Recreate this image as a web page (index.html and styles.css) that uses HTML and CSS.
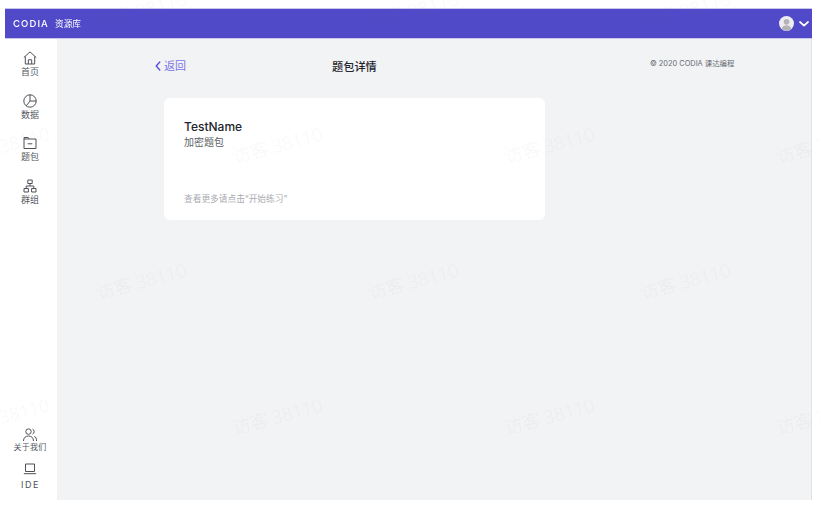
FILE: index.html
```html
<!DOCTYPE html>
<html lang="zh-CN">
<head>
<meta charset="utf-8">
<title>题包详情</title>
<link rel="stylesheet" href="styles.css">
</head>
<body>
<div class="app">
  <header class="topbar">
    <div class="brand"><span class="logo">CODIA</span><span class="lib">资源库</span></div>
    <div class="user">
      <svg class="avatar" viewBox="0 0 16 16"><circle cx="8" cy="8" r="8" fill="#eeeef1"/><circle cx="8" cy="6.200" r="3" fill="#b4b4b8"/><path d="M2.800 13.600c.8-2.600 2.800-3.800 5.200-3.800s4.400 1.200 5.200 3.800A8 8 0 0 1 8 16a8 8 0 0 1-5.200-2.400z" fill="#b4b4b8"/></svg>
      <svg class="caret" viewBox="0 0 10 6"><path d="M1 1l4 3.600L9 1" fill="none" stroke="#fff" stroke-width="1.700" stroke-linecap="round" stroke-linejoin="round"/></svg>
    </div>
  </header>
  <div class="body">
    <nav class="sidebar">
      <div class="nav-top">
        <a class="nav-item">
          <svg class="icon" viewBox="0 0 14 14"><path d="M.8 6.500L7 .9l6.200 5.600M2.300 5.400v7.600h9.400V5.400M5.300 13V8.800h3.400V13"/></svg>
          <span>首页</span>
        </a>
        <a class="nav-item">
          <svg class="icon" viewBox="0 0 14 14"><circle cx="7" cy="7" r="6.200"/><path d="M7 .8V7h6.200M7 7l-3.800 4.900"/></svg>
          <span>数据</span>
        </a>
        <a class="nav-item">
          <svg class="icon" viewBox="0 0 14 14"><path d="M1 1.500h4.200l1 1.500H13v9.500H1zM1 3h5.200M4.700 7.800h4.600"/></svg>
          <span>题包</span>
        </a>
        <a class="nav-item">
          <svg class="icon" viewBox="0 0 14 14"><path d="M4.800 1h4.400v3.500H4.800zM1 9.500h4.400V13H1zM8.600 9.500H13V13H8.600zM7 4.500V7M3.200 9.500V7h7.600v2.500"/></svg>
          <span>群组</span>
        </a>
      </div>
      <div class="nav-bottom">
        <a class="nav-item tight">
          <svg class="icon wide" viewBox="0 0 16 14"><circle cx="6.500" cy="3.600" r="2.700"/><path d="M1.500 13c0-3.200 2-5 5-5s5 1.800 5 5M10.500 1.100a2.700 2.700 0 0 1 0 5M12.300 8.300c1.500.7 2.300 2.300 2.300 4.700"/></svg>
          <span class="small">关于我们</span>
        </a>
        <a class="nav-item tight">
          <svg class="icon" viewBox="0 0 14 14"><path d="M2.500 2h9v7.500h-9zM.8 11.700h12.400"/></svg>
          <span class="ide">IDE</span>
        </a>
      </div>
    </nav>
    <main class="main">
      <div class="page-head">
        <a class="back"><svg class="back-icon" viewBox="0 0 6 10"><path d="M4.800 1L1.200 5l3.600 4" fill="none" stroke="#5a50d6" stroke-width="1.400" stroke-linecap="round" stroke-linejoin="round"/></svg>返回</a>
        <h1 class="title">题包详情</h1>
        <p class="copyright">© 2020 CODIA 课达编程</p>
      </div>
      <section class="card">
        <h2 class="card-name">TestName</h2>
        <p class="card-type">加密题包</p>
        <p class="card-hint">查看更多请点击“开始练习”</p>
      </section>
    </main>
  </div>
</div>
<div class="watermarks" aria-hidden="true">
  <span class="wm r1 c1">访客 38110</span><span class="wm r1 c2">访客 38110</span><span class="wm r1 c3">访客 38110</span>
  <span class="wm r2 c0">访客 38110</span><span class="wm r2 c4">访客 38110</span><span class="wm r2 c5">访客 38110</span><span class="wm r2 c6">访客 38110</span>
  <span class="wm r3 c1">访客 38110</span><span class="wm r3 c2">访客 38110</span><span class="wm r3 c3">访客 38110</span>
  <span class="wm r4 c0">访客 38110</span><span class="wm r4 c4">访客 38110</span><span class="wm r4 c5">访客 38110</span><span class="wm r4 c6">访客 38110</span>
</div>
</body>
</html>
```
FILE: styles.css
```css
* { box-sizing: border-box; }
html, body { margin: 0; height: 100%; background: #fff; overflow: hidden; }
body {
  font-family: Inter, "Noto Sans CJK SC", sans-serif;
  color: #22252e;
  padding: 9px 8px 6px 5px;
  position: relative;
}
.app { height: 491px; display: flex; flex-direction: column; filter: blur(.3px); }
.topbar {
  height: 29px;
  flex: none;
  background: #504ac9;
  box-shadow: 0 -1px 0 #c9c6ee, 0 1px 0 #c9c6ee;
  display: flex;
  align-items: center;
  justify-content: space-between;
  padding: 0 3px 0 8px;
  color: #fff;
  position: relative;
  z-index: 1;
}
.brand { display: flex; align-items: center; gap: 6px; }
.logo { font-size: 9.500px; font-weight: 500; letter-spacing: 1.100px; }
.lib { font-size: 8.700px; line-height: 12px; }
.user { display: flex; align-items: center; gap: 5px; }
.avatar { width: 15px; height: 15px; }
.caret { width: 10px; height: 6px; }
.body { flex: 1; display: flex; min-height: 0; }
.sidebar {
  width: 53px;
  flex: none;
  background: #fff;
  display: flex;
  flex-direction: column;
  justify-content: space-between;
  align-items: center;
  padding: 13px 2px 8px 0;
  border-right: 1px solid #f1f1f3;
}
.nav-top { display: flex; flex-direction: column; gap: 13px; }
.nav-bottom { display: flex; flex-direction: column; gap: 9px; }
.nav-item { display: flex; flex-direction: column; align-items: center; gap: 0; color: #55585f; font-size: 9px; line-height: 14px; height: 29.700px; }
.nav-item.tight { height: auto; }
.icon { width: 14px; height: 14px; fill: none; stroke: #4e5158; stroke-width: 1; stroke-linejoin: round; flex: none; }
.icon.wide { width: 16px; }
.small { font-size: 8px; line-height: 11px; letter-spacing: .3px; }
.ide { font-size: 9px; letter-spacing: 1.500px; margin-top: 2px; margin-left: 1px; color: #4e5158; }
.main { flex: 1; background: #f2f3f5; border-right: 1px solid #e3e3e6; padding: 0 0 0 106px; min-width: 0; }
.page-head { height: 60px; display: flex; align-items: flex-start; position: relative; }
.back { display: flex; align-items: center; gap: 3px; color: #7a72e6; font-size: 11px; line-height: 14px; margin: 21px 0 0 -9px; width: 177px; flex: none; }
.back-icon { width: 6px; height: 10px; }
.title { margin: 21px 0 0; font-size: 11.200px; font-weight: 500; line-height: 16px; color: #22252e; width: 318px; flex: none; }
.copyright { margin: 21px 0 0; font-size: 7.400px; line-height: 10px; color: #666a72; white-space: nowrap; }
.card {
  width: 381px;
  height: 122px;
  background: #fff;
  border-radius: 6px;
  padding: 21px 20px 0;
  display: flex;
  flex-direction: column;
}
.card-name { margin: 0; font-size: 12px; line-height: 15px; font-weight: 500; color: #22252e; }
.card-type { margin: 1px 0 0; font-size: 10px; line-height: 14px; color: #5c5f66; }
.card-hint { margin: 44px 0 0; font-size: 8.700px; line-height: 12px; color: #a9abb2; }
.watermarks { position: absolute; inset: 0; pointer-events: none; z-index: 5; overflow: hidden; filter: blur(.3px); }
.wm {
  position: absolute;
  font-size: 18px;
  line-height: 24px;
  font-weight: 300;
  white-space: nowrap;
  color: rgba(120, 120, 135, .06);
  font-family: "Open Sans", "Noto Sans CJK SC", sans-serif;
  transform: rotate(-15deg);
  transform-origin: left center;
}
.r1 { top: 10px; }
.r2 { top: 145px; }
.r3 { top: 281px; }
.r4 { top: 416px; }
.c0 { left: -40px; }
.c1 { left: 97px; }
.c2 { left: 369px; }
.c3 { left: 641px; }
.c4 { left: 233px; }
.c5 { left: 505px; }
.c6 { left: 777px; }
```
